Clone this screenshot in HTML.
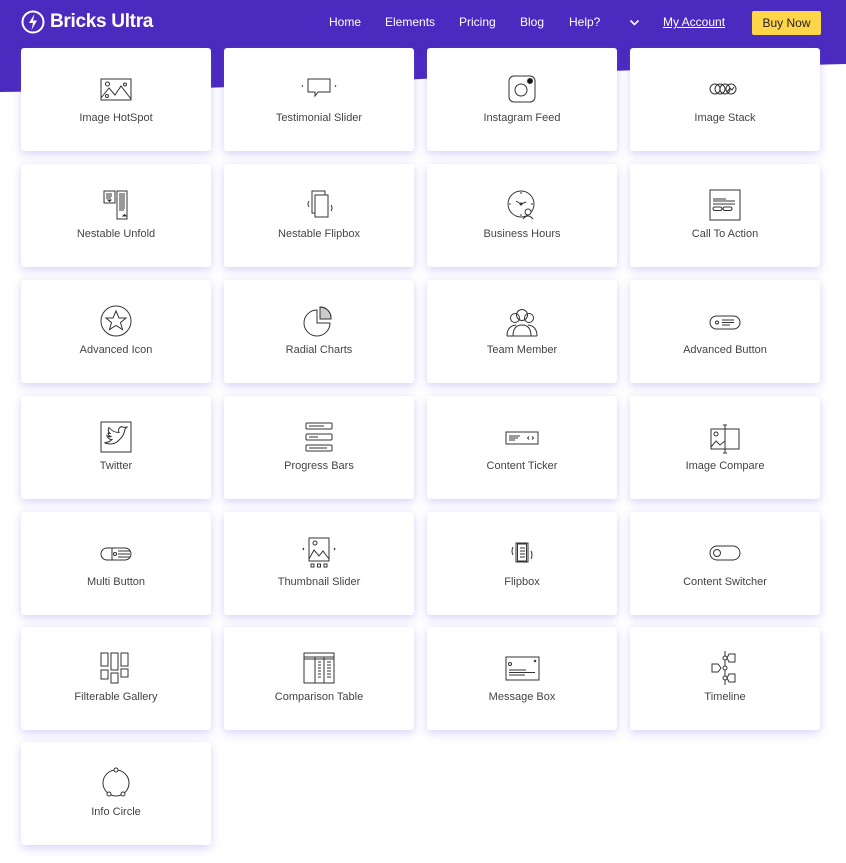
<!DOCTYPE html>
<html><head><meta charset="utf-8">
<style>
*{margin:0;padding:0;box-sizing:border-box}
body{width:846px;height:863px;background:#fff;position:relative;overflow:hidden;font-family:"Liberation Sans",sans-serif}
.hdr{position:absolute;left:0;top:0;width:846px;height:100px}
.logo{position:absolute;left:21px;top:10px;display:flex;align-items:center;color:#fff;font-weight:bold;font-size:19px;letter-spacing:-0.3px}
.nav{position:absolute;top:15px;color:#fff;font-size:12px}
.buy{position:absolute;left:752px;top:11px;width:69px;height:24px;background:#ffd54a;border-radius:2px;color:#222;font-size:12px;text-align:center;line-height:24px}
.card{position:absolute;width:190px;height:103px;background:#fff;border-radius:3px;box-shadow:0 4px 10px rgba(110,90,230,.22),0 0 6px rgba(120,100,230,.08)}
.card svg{position:absolute;left:77px;top:23px;width:36px;height:36px;fill:none;stroke:#333;stroke-width:1}
.card span{position:absolute;left:0;right:0;top:64px;text-align:center;font-size:11px;color:#444}
</style></head><body>
<svg class="hdr" viewBox="0 0 846 100" preserveAspectRatio="none"><path d="M0 0H846V64Q600 70 400 80T0 92Z" fill="#4b2abf"/><path d="M0 0H846V48H0Z" fill="#4b2abf"/></svg>
<div class="logo"><svg width="24" height="24" viewBox="0 0 24 24"><circle cx="12" cy="12" r="10.5" fill="none" stroke="#fff" stroke-width="2"/><path d="M13.5 4L8 13h4l-1.5 7L16 10.5h-4z" fill="#fff"/></svg><span style="margin-left:5px">Bricks Ultra</span></div>
<div class="nav" style="left:329px">Home</div>
<div class="nav" style="left:385px">Elements</div>
<div class="nav" style="left:459px">Pricing</div>
<div class="nav" style="left:520px">Blog</div>
<div class="nav" style="left:569px">Help?</div>
<svg style="position:absolute;left:629px;top:19px" width="11" height="8" viewBox="0 0 11 8"><path d="M1.5 1.5l4 4 4-4" fill="none" stroke="#fff" stroke-width="1.6"/></svg>
<div class="nav" style="left:663px;text-decoration:underline">My Account</div>
<div class="buy">Buy Now</div>

<div class="card" style="left:21px;top:48px"><svg viewBox="0 0 36 36"><rect x="3" y="8" width="30" height="21"/><circle cx="9.5" cy="13" r="2"/><circle cx="27" cy="13.5" r="1.5"/><path d="M3 27l8-10 6 7 6-9 10 13"/><circle cx="9" cy="25" r="1.5"/></svg><span>Image HotSpot</span></div>
<div class="card" style="left:224px;top:48px"><svg viewBox="0 0 36 36"><path d="M7 8h22v13H17l-3 4v-4h-7z"/><path d="M2 14l-1 1 1 1M34 14l1 1-1 1" stroke-width=".7"/></svg><span>Testimonial Slider</span></div>
<div class="card" style="left:427px;top:48px"><svg viewBox="0 0 36 36"><rect x="5" y="5" width="26" height="26" rx="5"/><circle cx="17" cy="19" r="6"/><circle cx="26" cy="10" r="2.5" fill="#111"/></svg><span>Instagram Feed</span></div>
<div class="card" style="left:630px;top:48px"><svg viewBox="0 0 36 36"><circle cx="8" cy="18" r="5"/><circle cx="13" cy="18" r="5"/><circle cx="18" cy="18" r="5"/><circle cx="24" cy="18" r="5"/><path d="M20 21l3-4 2 2 2-3"/></svg><span>Image Stack</span></div>

<div class="card" style="left:21px;top:164px"><svg viewBox="0 0 36 36"><rect x="6" y="4" width="11" height="12"/><rect x="19" y="4" width="10" height="28"/><path d="M8 7h6M8 9h6M8 11h5M21 7h6M21 9h6M21 11h6M21 13h6M21 15h6M21 17h6M21 19h6M21 21h6M21 23h5"/><path d="M10 13l1.5 1.5L13 13z M25 29l1.5-1.5L28 29z" fill="#333"/></svg><span>Nestable Unfold</span></div>
<div class="card" style="left:224px;top:164px"><svg viewBox="0 0 36 36"><rect x="11" y="4" width="13" height="22"/><rect x="14" y="8" width="13" height="22" fill="#fff"/><path d="M8 14q-2 3 0 6M30 18q2 3 0 6"/></svg><span>Nestable Flipbox</span></div>
<div class="card" style="left:427px;top:164px"><svg viewBox="0 0 36 36"><circle cx="17" cy="17" r="13"/><path d="M17 17l-5-3M17 17l5-2"/><circle cx="17" cy="17" r="1" fill="#333"/><circle cx="24" cy="25" r="3" fill="#fff"/><path d="M19 32q5-6 10 0" /><path d="M17 5v2M29 17h-2M5 17h2M17 29v-2"/></svg><span>Business Hours</span></div>
<div class="card" style="left:630px;top:164px"><svg viewBox="0 0 36 36"><rect x="3" y="3" width="30" height="30"/><path d="M6 12h13M6 14h22M6 17h22"/><rect x="6" y="20" width="9" height="3.5" rx="1.7"/><rect x="16" y="20" width="9" height="3.5" rx="1.7"/></svg><span>Call To Action</span></div>

<div class="card" style="left:21px;top:280px"><svg viewBox="0 0 36 36"><circle cx="18" cy="18" r="15"/><path d="M18 8l3 7h7l-5.5 4.5 2 7-6.5-4-6.5 4 2-7L8 15h7z"/></svg><span>Advanced Icon</span></div>
<div class="card" style="left:224px;top:280px"><svg viewBox="0 0 36 36"><path d="M16 7a13 13 0 1 0 13 13H16z"/><path d="M19 4a11 11 0 0 1 11 12H19z" fill="#ccc"/><path d="M19 4a11 11 0 0 1 11 12H19z"/></svg><span>Radial Charts</span></div>
<div class="card" style="left:427px;top:280px"><svg viewBox="0 0 36 36"><circle cx="18" cy="12" r="5.5"/><circle cx="11" cy="15" r="4.5"/><circle cx="25" cy="15" r="4.5"/><path d="M3 33q0-10 9-11M33 33q0-10-9-11M9 33q0-11 9-11t9 11M3 33h30"/></svg><span>Team Member</span></div>
<div class="card" style="left:630px;top:280px"><svg viewBox="0 0 36 36"><rect x="3" y="13" width="30" height="13" rx="6.5"/><circle cx="10" cy="19.5" r="1.5"/><path d="M15 17h12M15 19.5h12M15 22h8"/></svg><span>Advanced Button</span></div>

<div class="card" style="left:21px;top:396px"><svg viewBox="0 0 36 36"><rect x="3" y="3" width="30" height="30"/><path d="M7 24q9 3 14-3 5-4 6-11l2-2-3 .5q-3-2-5 1-1 2 0 4-6 0-10-5-2 3 1 6-2 0-2-1 0 3 3 4-2 1-4-1 1 4 5 4-3 3-7 3z"/></svg><span>Twitter</span></div>
<div class="card" style="left:224px;top:396px"><svg viewBox="0 0 36 36"><rect x="5" y="4" width="26" height="6" rx="1"/><rect x="5" y="15" width="26" height="6" rx="1"/><rect x="5" y="26" width="26" height="6" rx="1"/><path d="M8 7h15M8 18h9M8 29h18"/></svg><span>Progress Bars</span></div>
<div class="card" style="left:427px;top:396px"><svg viewBox="0 0 36 36"><rect x="2" y="13" width="32" height="12"/><path d="M5 17h11M5 19h9M5 21h6M25 17.5l-1.5 1.5 1.5 1.5M28 17.5l1.5 1.5-1.5 1.5" stroke-width=".9"/></svg><span>Content Ticker</span></div>
<div class="card" style="left:630px;top:396px"><svg viewBox="0 0 36 36"><rect x="4" y="10" width="28" height="20"/><circle cx="9" cy="15" r="2"/><path d="M4 28l5-6 4 4 5-4M18 6v28M16 6h4M16 34h4"/></svg><span>Image Compare</span></div>

<div class="card" style="left:21px;top:512px"><svg viewBox="0 0 36 36"><rect x="3" y="13" width="30" height="12" rx="6"/><path d="M14 13v12"/><circle cx="17" cy="19" r="1.5"/><path d="M20 16h12M20 19h12M20 22h12"/></svg><span>Multi Button</span></div>
<div class="card" style="left:224px;top:512px"><svg viewBox="0 0 36 36"><rect x="8" y="3" width="20" height="23"/><circle cx="14" cy="8" r="2"/><path d="M8 24l5-9 5 6 4-5 6 8M3 13l-1 1 1 1M33 13l1 1-1 1" /><rect x="10" y="29" width="3" height="3"/><rect x="16.5" y="29" width="3" height="3"/><rect x="23" y="29" width="3" height="3"/></svg><span>Thumbnail Slider</span></div>
<div class="card" style="left:427px;top:512px"><svg viewBox="0 0 36 36"><rect x="12" y="8" width="12" height="19"/><rect x="13.5" y="9" width="9" height="17"/><path d="M16 13h5M16 16h5M16 19h5M16 22h5M9 12q-2 4 0 8M27 16q2 4 0 8"/></svg><span>Flipbox</span></div>
<div class="card" style="left:630px;top:512px"><svg viewBox="0 0 36 36"><rect x="3" y="11" width="30" height="14" rx="7"/><circle cx="10" cy="18" r="3.5"/></svg><span>Content Switcher</span></div>

<div class="card" style="left:21px;top:627px"><svg viewBox="0 0 36 36"><rect x="3" y="3" width="7" height="13"/><rect x="13" y="3" width="7" height="17"/><rect x="23" y="3" width="7" height="13"/><rect x="3" y="20" width="7" height="9"/><rect x="13" y="23" width="7" height="10"/><rect x="23" y="19" width="7" height="8"/></svg><span>Filterable Gallery</span></div>
<div class="card" style="left:224px;top:627px"><svg viewBox="0 0 36 36"><rect x="3" y="3" width="30" height="30"/><path d="M3 7h30M3 9h30M14 7v26M23 7v26M17 12h3M17 15h3M17 18h3M17 21h3M17 24h3M17 27h3M26 12h4M26 15h4M26 18h4M26 21h4M26 24h4M26 27h4"/></svg><span>Comparison Table</span></div>
<div class="card" style="left:427px;top:627px"><svg viewBox="0 0 36 36"><rect x="2" y="7" width="33" height="23"/><circle cx="6" cy="14" r="1.5"/><path d="M5 20h17M5 22.5h26M5 25h16M30 10l2 2M32 10l-2 2"/></svg><span>Message Box</span></div>
<div class="card" style="left:630px;top:627px"><svg viewBox="0 0 36 36"><path d="M18 1v34"/><circle cx="18" cy="8" r="2" fill="#fff"/><circle cx="18" cy="18" r="2" fill="#fff"/><circle cx="18" cy="28" r="2" fill="#fff"/><path d="M22 4h6v8h-6l-2-4zM22 24h6v8h-6l-2-4zM5 14h6l3 4-3 4H5z"/></svg><span>Timeline</span></div>

<div class="card" style="left:21px;top:742px"><svg viewBox="0 0 36 36"><circle cx="18" cy="18" r="13"/><circle cx="18" cy="5" r="2" fill="#fff"/><circle cx="11" cy="29" r="2" fill="#fff"/><circle cx="25" cy="29" r="2" fill="#fff"/></svg><span>Info Circle</span></div>
</body></html>
